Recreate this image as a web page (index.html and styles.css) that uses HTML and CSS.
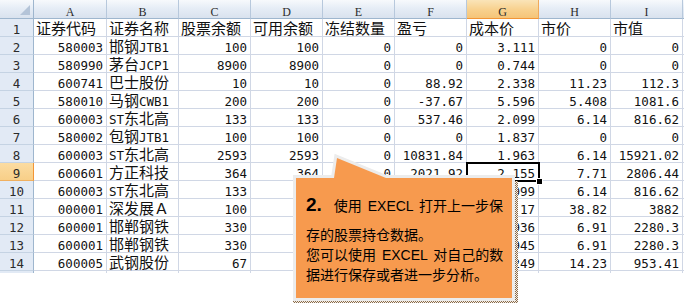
FILE: index.html
```html
<!DOCTYPE html>
<html lang="zh-CN">
<head>
<meta charset="utf-8">
<title>持仓数据</title>
<link rel="stylesheet" href="styles.css">
</head>
<body>
<div class="page">
  <div class="sheet">
    <div class="grid">
      <div class="ch corner"></div>
      <div class="ch">A</div><div class="ch">B</div><div class="ch">C</div><div class="ch">D</div><div class="ch">E</div><div class="ch">F</div><div class="ch sel">G</div><div class="ch">H</div><div class="ch">I</div><div class="ch"></div>

      <div class="rh">1</div>
      <div class="t">证券代码</div><div class="t">证券名称</div><div class="t">股票余额</div><div class="t">可用余额</div><div class="t">冻结数量</div><div class="t">盈亏</div><div class="t">成本价</div><div class="t">市价</div><div class="t">市值</div><div class="t"></div>

      <div class="rh">2</div>
      <div class="n">580003</div><div class="t">邯钢<span class="l">JTB1</span></div><div class="n">100</div><div class="n">100</div><div class="n">0</div><div class="n">0</div><div class="n">3.111</div><div class="n">0</div><div class="n">0</div><div class="t"></div>

      <div class="rh">3</div>
      <div class="n">580990</div><div class="t">茅台<span class="l">JCP1</span></div><div class="n">8900</div><div class="n">8900</div><div class="n">0</div><div class="n">0</div><div class="n">0.744</div><div class="n">0</div><div class="n">0</div><div class="t"></div>

      <div class="rh">4</div>
      <div class="n">600741</div><div class="t">巴士股份</div><div class="n">10</div><div class="n">10</div><div class="n">0</div><div class="n">88.92</div><div class="n">2.338</div><div class="n">11.23</div><div class="n">112.3</div><div class="t"></div>

      <div class="rh">5</div>
      <div class="n">580010</div><div class="t">马钢<span class="l">CWB1</span></div><div class="n">200</div><div class="n">200</div><div class="n">0</div><div class="n">-37.67</div><div class="n">5.596</div><div class="n">5.408</div><div class="n">1081.6</div><div class="t"></div>

      <div class="rh">6</div>
      <div class="n">600003</div><div class="t"><span class="l">ST</span>东北高</div><div class="n">133</div><div class="n">133</div><div class="n">0</div><div class="n">537.46</div><div class="n">2.099</div><div class="n">6.14</div><div class="n">816.62</div><div class="t"></div>

      <div class="rh">7</div>
      <div class="n">580002</div><div class="t">包钢<span class="l">JTB1</span></div><div class="n">100</div><div class="n">100</div><div class="n">0</div><div class="n">0</div><div class="n">1.837</div><div class="n">0</div><div class="n">0</div><div class="t"></div>

      <div class="rh">8</div>
      <div class="n">600003</div><div class="t"><span class="l">ST</span>东北高</div><div class="n">2593</div><div class="n">2593</div><div class="n">0</div><div class="n">10831.84</div><div class="n">1.963</div><div class="n">6.14</div><div class="n">15921.02</div><div class="t"></div>

      <div class="rh sel">9</div>
      <div class="n">600601</div><div class="t">方正科技</div><div class="n">364</div><div class="n">364</div><div class="n">0</div><div class="n">2021.92</div><div class="n active">2.155<span class="cursor"></span></div><div class="n">7.71</div><div class="n">2806.44</div><div class="t"></div>

      <div class="rh">10</div>
      <div class="n">600003</div><div class="t"><span class="l">ST</span>东北高</div><div class="n">133</div><div class="n">133</div><div class="n">0</div><div class="n">537.46</div><div class="n">2.099</div><div class="n">6.14</div><div class="n">816.62</div><div class="t"></div>

      <div class="rh">11</div>
      <div class="n">000001</div><div class="t">深发展Ａ</div><div class="n">100</div><div class="n">100</div><div class="n">0</div><div class="n">2165</div><div class="n">17.17</div><div class="n">38.82</div><div class="n">3882</div><div class="t"></div>

      <div class="rh">12</div>
      <div class="n">600001</div><div class="t">邯郸钢铁</div><div class="n">330</div><div class="n">330</div><div class="n">0</div><div class="n">651.42</div><div class="n">4.936</div><div class="n">6.91</div><div class="n">2280.3</div><div class="t"></div>

      <div class="rh">13</div>
      <div class="n">600001</div><div class="t">邯郸钢铁</div><div class="n">330</div><div class="n">330</div><div class="n">0</div><div class="n">648.45</div><div class="n">4.945</div><div class="n">6.91</div><div class="n">2280.3</div><div class="t"></div>

      <div class="rh">14</div>
      <div class="n">600005</div><div class="t">武钢股份</div><div class="n">67</div><div class="n">67</div><div class="n">0</div><div class="n">333.73</div><div class="n">9.249</div><div class="n">14.23</div><div class="n">953.41</div><div class="t"></div>

      <div class="rh"></div>
      <div class="n"></div><div class="t"></div><div class="n"></div><div class="n"></div><div class="n"></div><div class="n"></div><div class="n"></div><div class="n"></div><div class="n"></div><div class="t"></div>
    </div>
  </div>

  <div class="callout">
    <svg class="callout-bg" width="230" height="153" viewBox="0 0 230 153" aria-hidden="true">
      <defs>
        <pattern id="dots" width="2" height="2" patternUnits="userSpaceOnUse">
          <rect width="2" height="2" fill="#f3efe9"/>
          <rect width="1" height="1" fill="#8a6a48"/>
          <rect x="1" y="1" width="1" height="1" fill="#8a6a48"/>
        </pattern>
      </defs>
      <rect x="3" y="31" width="225" height="122" fill="url(#dots)"/>
      <path d="M6 28 L44 28 L47 8 L96 28 L222 28 L222 148 L6 148 Z" fill="#f79a4e" stroke="#ececec" stroke-width="6" stroke-linejoin="miter" paint-order="stroke"/>
    </svg>
    <div class="callout-text">
      <p class="lead"><b class="step">2.</b>使用 EXECL 打开上一步保</p>
      <p class="body">存的股票持仓数据。<br>您可以使用 EXCEL 对自己的数<br>据进行保存或者进一步分析。</p>
    </div>
  </div>
</div>
</body>
</html>
```

FILE: styles.css
```css
html, body {
  margin: 0;
  padding: 0;
  background: #ffffff;
}

.page {
  position: relative;
  width: 684px;
  height: 303px;
  overflow: hidden;
}

.sheet {
  height: 273px;
  overflow: hidden;
}

.grid {
  display: grid;
  grid-template-columns: 34px 73px repeat(8, 72px) 1fr;
  grid-template-rows: 19px repeat(15, 18px);
}

.grid > div {
  box-sizing: border-box;
  border-right: 1px solid #d0d7e5;
  border-bottom: 1px solid #d0d7e5;
  white-space: nowrap;
  color: #111;
}

/* column headers */
.grid > .ch {
  background: linear-gradient(#f7f9fc 0%, #e6edf6 45%, #d9e2ee 100%);
  border-right: 1px solid #b7c8dc;
  border-bottom: 1px solid #9eb6ce;
  font: 12px/14px "Liberation Serif", serif;
  padding-top: 5px;
  text-align: center;
  color: #2b2b2b;
}

.grid > .corner {
  position: relative;
  border-right: 1px solid #9eb6ce;
}

.corner::after {
  content: "";
  position: absolute;
  right: 3px;
  bottom: 3px;
  width: 10px;
  height: 10px;
  background: #b4c4d8;
  clip-path: polygon(100% 0, 100% 100%, 0 100%);
}

/* row headers */
.grid > .rh {
  background: #e2eaf5;
  border-right: 1px solid #9eb6ce;
  border-bottom: 1px solid #c5d3e3;
  font: 12.5px/17px "DejaVu Sans Mono", monospace;
  padding-top: 2px;
  text-align: center;
  color: #2b2b2b;
}

.grid > .ch.sel {
  background: linear-gradient(#fae4b8 0%, #f8d290 50%, #f5c478 100%);
  border-right: 1px solid #f0a95a;
  border-bottom: 1px solid #f29536;
}

.grid > .rh.sel {
  background: linear-gradient(#fbdca2 0%, #f8cf88 100%);
  border-right: 1px solid #f29536;
  border-bottom: 1px solid #f0b060;
}

/* text cells */
.grid > .t {
  font: 15px/17px "Noto Sans CJK SC", sans-serif;
  padding-left: 2px;
}

.l {
  font-family: "DejaVu Sans Mono", monospace;
  font-size: 12.5px;
}

/* numeric cells */
.grid > .n {
  font: 12.5px/17px "DejaVu Sans Mono", monospace;
  padding: 2px 3px 0 0;
  text-align: right;
}

.grid > .active {
  position: relative;
}

.active::before {
  content: "";
  position: absolute;
  left: -1px;
  top: -1px;
  right: -2px;
  bottom: -2px;
  border: 2px solid #000;
}

.cursor {
  position: absolute;
  right: -4px;
  bottom: -4px;
  width: 5px;
  height: 5px;
  background: #000;
  outline: 1px solid #fff;
}

/* callout */
.callout {
  position: absolute;
  left: 290px;
  top: 150px;
  width: 230px;
  height: 153px;
}

.callout-bg {
  position: absolute;
  left: 0;
  top: 0;
}

.callout-text {
  position: relative;
  padding: 45px 0 0 16px;
  font: 14px/20px "Liberation Sans", "Noto Sans CJK SC", sans-serif;
  color: #000;
  white-space: nowrap;
  word-spacing: 2px;
}

.callout-text p {
  margin: 0;
}

.callout-text .lead {
  margin-bottom: 9px;
}

.step {
  font-size: 19px;
  font-weight: bold;
  margin-right: 12px;
}
```
